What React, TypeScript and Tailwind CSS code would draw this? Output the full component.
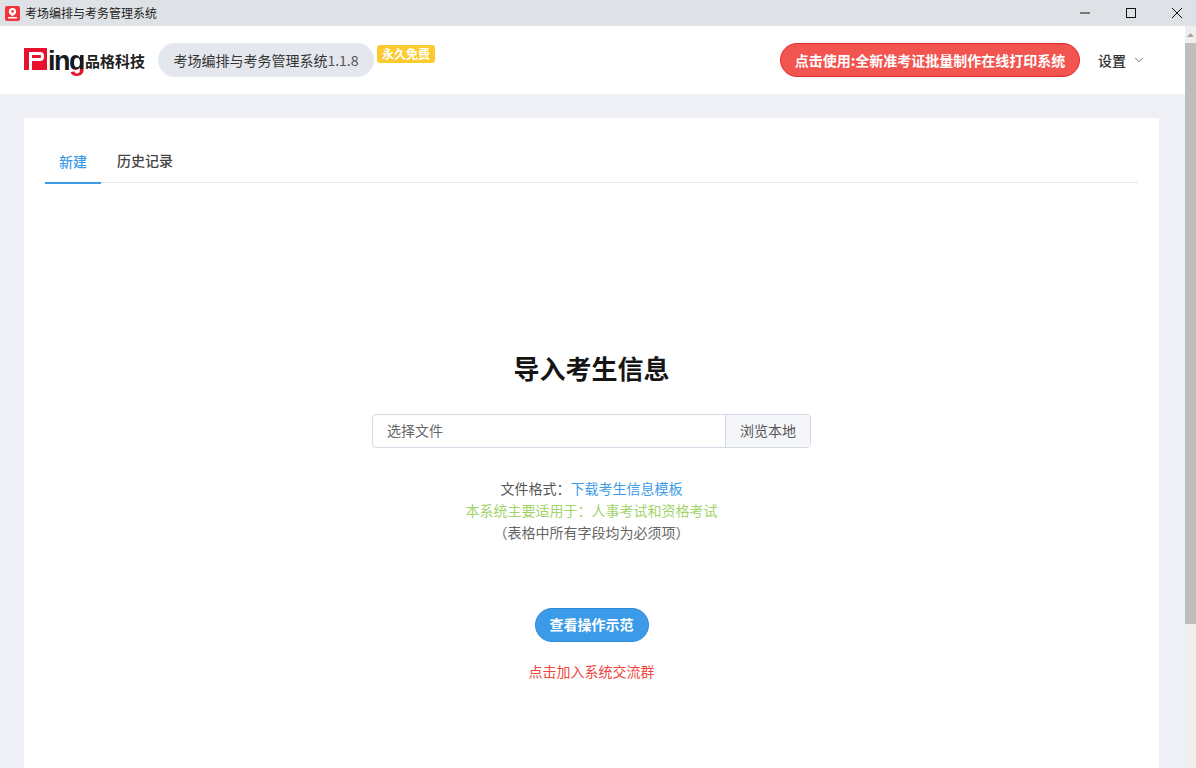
import { ChevronDown } from 'lucide-react'

const font = { cjk: "font-['Noto_Sans_CJK_SC','Liberation_Sans',sans-serif]" }

function AppIcon() {
  return (
    <svg width="15" height="15" viewBox="0 0 15 15">
      <rect x="0" y="0" width="15" height="15" rx="2" fill="#f2343a" />
      <circle cx="7.5" cy="5.6" r="3.6" fill="#fff" />
      <circle cx="7.5" cy="5.4" r="1.3" fill="#f2343a" />
      <path d="M6 8.5h3l-1.5 2.3z" fill="#fff" />
      <rect x="3" y="11" width="9" height="1.5" fill="#fff" />
    </svg>
  )
}

function TitleBar() {
  return (
    <div className="flex h-[26px] shrink-0 items-center bg-[#dee1e6] pl-[5px]">
      <AppIcon />
      <span className="ml-[5px] text-[12px] leading-none text-[#222]">考场编排与考务管理系统</span>
      <div className="ml-auto flex items-center pr-[14px]">
        <svg width="10" height="10" viewBox="0 0 10 10" className="mr-[36px]">
          <path d="M0 5h10" stroke="#111" strokeWidth="1" />
        </svg>
        <svg width="10" height="10" viewBox="0 0 10 10" className="mr-[36px]">
          <rect x="0.5" y="0.5" width="9" height="9" fill="none" stroke="#111" strokeWidth="1" />
        </svg>
        <svg width="10" height="10" viewBox="0 0 10 10">
          <path d="M0 0l10 10M10 0L0 10" stroke="#111" strokeWidth="1" />
        </svg>
      </div>
    </div>
  )
}

function Logo() {
  return (
    <div className="flex h-[30px] w-[120px] items-center">
      <svg width="23" height="22" viewBox="0 0 23 22" className="mb-[3px] shrink-0">
        <path d="M0 0h23v22H0z" fill="#e8112d" />
        <path d="M5 4h11a4 4 0 0 1 4 4v1a4 4 0 0 1-4 4H8v9H5zM8 7v3h8a1 1 0 0 0 1-1V8a1 1 0 0 0-1-1z" fill="#fff" />
      </svg>
      <span className="ml-[1px] mt-[2px] font-['Liberation_Sans',sans-serif] text-[27px] font-bold leading-none tracking-[-1.5px] text-[#17191e]">
        in<span className="bg-[linear-gradient(#17191e_78%,#e8112d_78%)] bg-clip-text text-transparent">g</span>
      </span>
      <span className="ml-[1px] mt-[1px] whitespace-nowrap text-[15px] font-bold leading-none text-[#222]">品格科技</span>
    </div>
  )
}

function Header() {
  return (
    <div className="flex h-[68px] shrink-0 items-center bg-white pl-[24px]">
      <Logo />
      <div className="ml-[14px] flex h-[34px] w-[216px] items-center justify-center rounded-full bg-[#e4e7ee] text-[14px] text-[#333]">
        考场编排与考务管理系统<span className="text-[#555]">1.1.8</span>
      </div>
      <span className="mb-[13px] ml-[3px] flex h-[18px] w-[58px] items-center justify-center rounded-[3px] bg-[#fcca2e] text-[12px] font-bold text-white">
        永久免费
      </span>
      <button className="ml-auto flex h-[34px] w-[300px] items-center justify-center rounded-full border border-[#e82c2c] bg-[#f25450] text-[14px] font-bold text-white">
        点击使用:全新准考证批量制作在线打印系统
      </button>
      <span className="ml-[18px] text-[14px] font-medium text-[#333]">设置</span>
      <ChevronDown className="ml-[6px] mr-[39px] h-[14px] w-[14px] text-[#666]" strokeWidth={1.5} />
    </div>
  )
}

function Tabs() {
  return (
    <div className="flex h-[65px] items-end border-b border-[#e5e7ef]">
      <div className="-mb-[2px] flex h-[44px] w-[56px] items-center justify-center border-b-2 border-[#3c9be8] text-[14px] font-medium text-[#3c9be8]">
        新建
      </div>
      <div className="flex h-[44px] w-[88px] items-center justify-center text-[14px] font-medium text-[#444]">
        历史记录
      </div>
    </div>
  )
}

function ImportPanel() {
  return (
    <div className="flex flex-col items-center pt-[166px]">
      <h1 className="text-[26px] font-bold leading-[38px] text-[#151515]">导入考生信息</h1>
      <div className="mt-[27px] flex h-[34px] w-[439px] overflow-hidden rounded-[4px] border border-[#d5d9e5] text-[14px]">
        <div className="flex flex-1 items-center pb-[1px] pl-[14px] text-[#666]">选择文件</div>
        <div className="flex w-[85px] items-center justify-center border-l border-[#d5d9e5] bg-[#f5f6fa] pb-[1px] text-[#555]">
          浏览本地
        </div>
      </div>
      <div className="mt-[29px] flex flex-col items-center text-[14px] leading-[22px]">
        <p className="text-[#555]">
          文件格式：<span className="text-[#3c9be8]">下载考生信息模板</span>
        </p>
        <p className="text-[#a0d468]">本系统主要适用于：人事考试和资格考试</p>
        <p className="text-[#666]">（表格中所有字段均为必须项）</p>
      </div>
      <button className="mt-[65px] flex h-[34px] w-[114px] items-center justify-center rounded-full border border-[#2f88d8] bg-[#3c9be8] pb-[1px] text-[14px] font-bold text-white">
        查看操作示范
      </button>
      <p className="mt-[18px] text-[14px] leading-[22px] text-[#f0463c]">点击加入系统交流群</p>
    </div>
  )
}

function Scrollbar() {
  return (
    <div className="flex w-[11px] shrink-0 flex-col bg-[#efefef]">
      <div className="flex h-[17px] items-center justify-center">
        <svg width="7" height="4" viewBox="0 0 7 4">
          <path d="M3.5 0L7 4H0z" fill="#a3a3a3" />
        </svg>
      </div>
      <div className="h-[581px] bg-[#bdbdbd]" />
    </div>
  )
}

export default function App() {
  return (
    <div className={`flex h-[768px] flex-col overflow-hidden bg-[#eff0f5] ${font.cjk}`}>
      <TitleBar />
      <div className="flex min-h-0 flex-1">
        <div className="flex min-w-0 flex-1 flex-col">
          <Header />
          <div className="flex-1 pl-[24px] pr-[26px] pt-[24px]">
            <div className="h-full bg-white px-[21px]">
              <Tabs />
              <ImportPanel />
            </div>
          </div>
        </div>
        <Scrollbar />
      </div>
    </div>
  )
}
